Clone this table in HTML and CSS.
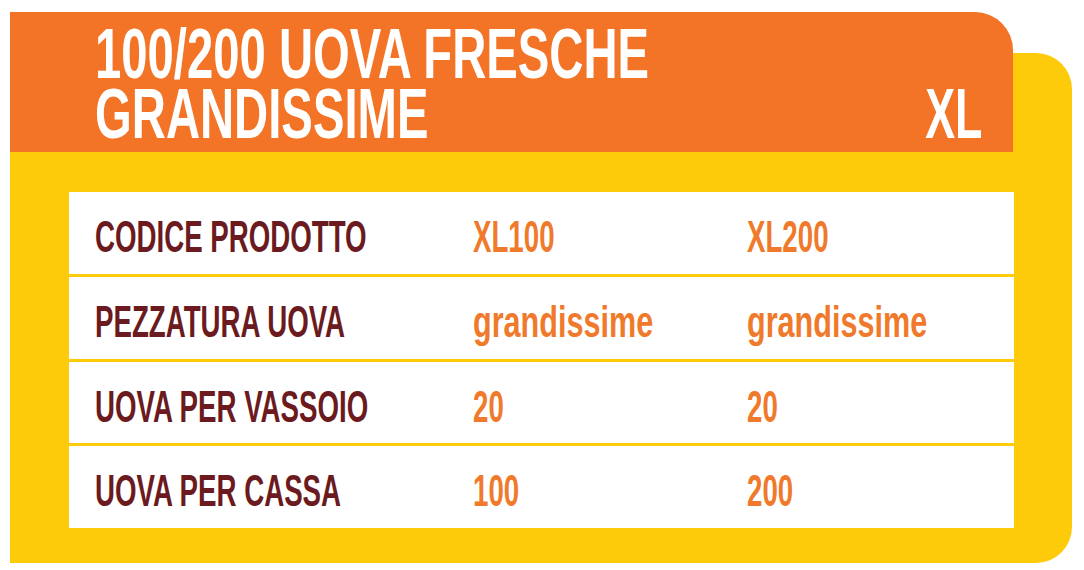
FILE: index.html
```html
<!DOCTYPE html>
<html lang="it">
<head>
<meta charset="utf-8">
<title>100/200 Uova fresche grandissime XL</title>
<link rel="stylesheet" href="styles.css">
</head>
<body>
<div class="card">
  <div class="header">
    <h1 class="title">
      <span class="title-line"><span class="narrow-left">100/200 UOVA FRESCHE</span></span>
      <span class="title-line"><span class="narrow-left">GRANDISSIME</span></span>
    </h1>
    <div class="size"><span class="narrow-right">XL</span></div>
  </div>
  <div class="table">
    <div class="row">
      <div class="label"><span class="narrow">CODICE PRODOTTO</span></div>
      <div class="value"><span class="narrow">XL100</span></div>
      <div class="value"><span class="narrow">XL200</span></div>
    </div>
    <div class="row">
      <div class="label"><span class="narrow">PEZZATURA UOVA</span></div>
      <div class="value"><span class="narrow lower">grandissime</span></div>
      <div class="value"><span class="narrow lower">grandissime</span></div>
    </div>
    <div class="row row-short">
      <div class="label"><span class="narrow">UOVA PER VASSOIO</span></div>
      <div class="value"><span class="narrow">20</span></div>
      <div class="value"><span class="narrow">20</span></div>
    </div>
    <div class="row">
      <div class="label"><span class="narrow">UOVA PER CASSA</span></div>
      <div class="value"><span class="narrow">100</span></div>
      <div class="value"><span class="narrow">200</span></div>
    </div>
  </div>
</div>
</body>
</html>
```

FILE: styles.css
```css
html, body {
  margin: 0;
  padding: 0;
  background: #ffffff;
}

body {
  font-family: "Liberation Sans", Arial, sans-serif;
  font-weight: 700;
}

.card {
  margin: 53px 0 0 10px;
  width: 1062px;
  background: #fecb0a;
  border-radius: 0 36px 36px 0;
  padding-bottom: 35px;
  display: flex;
  flex-direction: column;
}

.header {
  margin-top: -41px;
  width: 1003px;
  height: 140px;
  box-sizing: border-box;
  padding: 12px 31px 8px 85px;
  background: #f37427;
  border-radius: 0 38px 0 0;
  display: flex;
  justify-content: space-between;
  align-items: flex-end;
  color: #ffffff;
}

.title {
  margin: 0;
  flex: 1 1 auto;
  min-width: 0;
  font-size: 70px;
  line-height: 60px;
  font-weight: 700;
  white-space: nowrap;
  display: flex;
  flex-direction: column;
}

.title-line {
  display: block;
  height: 60px;
}

.size {
  flex: 0 0 auto;
  font-size: 70px;
  line-height: 60px;
}

.narrow-left {
  display: inline-block;
  transform: scaleX(0.675);
  transform-origin: left center;
}

.narrow-right {
  display: inline-block;
  transform: scaleX(0.64);
  transform-origin: right center;
}

.table {
  margin: 40px 58px 0 59px;
  display: flex;
  flex-direction: column;
  gap: 3px;
}

.row {
  background: #ffffff;
  height: 82px;
  box-sizing: border-box;
  padding: 7px 0 0 26px;
  display: grid;
  grid-template-columns: 378px 274px 1fr;
  font-size: 45px;
  line-height: 75px;
  white-space: nowrap;
}

.row-short {
  height: 81px;
}

.label {
  color: #6b1a20;
}

.value {
  color: #f07a2c;
}

.narrow {
  display: inline-block;
  transform: scaleX(0.615);
  transform-origin: left center;
}

.narrow.lower {
  transform: scaleX(0.68);
}
```
